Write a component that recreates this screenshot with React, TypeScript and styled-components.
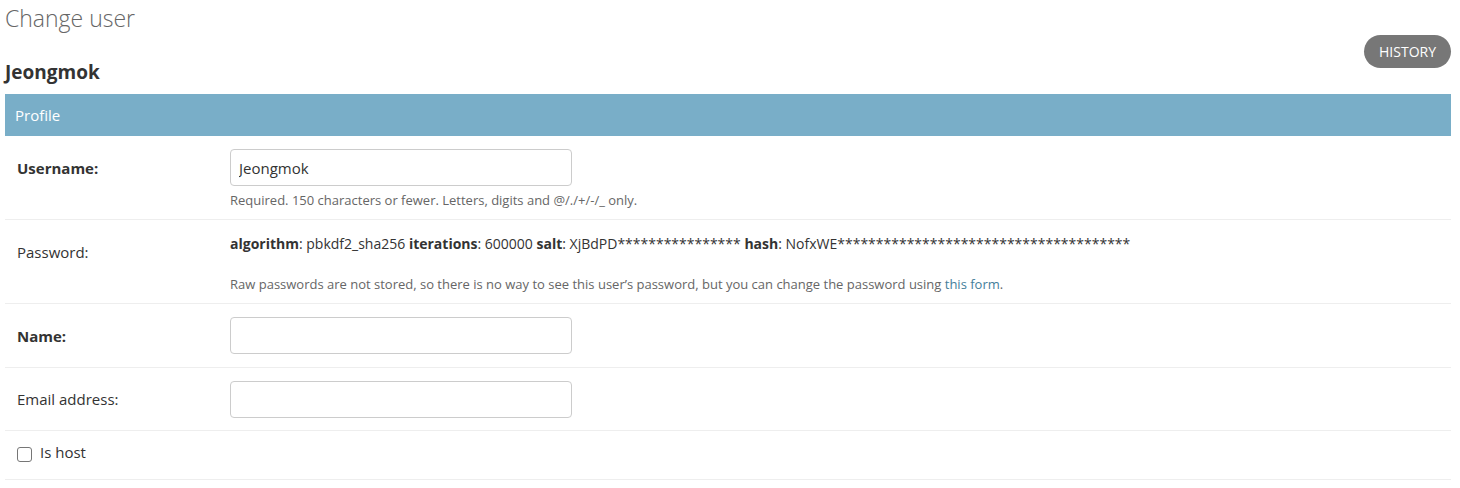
import React from 'react';
import styled, { createGlobalStyle } from 'styled-components';

const GlobalStyle = createGlobalStyle`
  html, body {
    margin: 0;
    padding: 0;
    background: #fff;
  }
  body {
    font-family: "Open Sans", "Noto Sans", "Liberation Sans", sans-serif;
    font-size: 14px;
    color: #333;
  }
`;

const Page = styled.div`
  padding: 0 9px 0 5px;
`;

const Title = styled.h1`
  margin: 0;
  padding-top: 3px;
  font-size: 23px;
  line-height: 30px;
  font-weight: 300;
  color: #666;
`;

const HeaderRow = styled.div`
  display: flex;
  justify-content: space-between;
  align-items: flex-end;
  margin-top: 2px;
  height: 59px;
`;

const UserName = styled.h2`
  margin: 0 0 9px;
  font-size: 19px;
  line-height: 26px;
  font-weight: 700;
  color: #333;
`;

const HistoryButton = styled.a`
  align-self: flex-start;
  display: inline-flex;
  align-items: center;
  height: 33px;
  padding: 0 15px;
  border-radius: 17px;
  background: #777;
  color: #fff;
  font-size: 14px;
  text-transform: uppercase;
  text-decoration: none;
`;

const Fieldset = styled.fieldset`
  margin: 0;
  padding: 0;
  border: 0;
`;

const Legend = styled.div`
  height: 42px;
  display: flex;
  align-items: center;
  padding: 0 10px;
  background: #79aec8;
  color: #fff;
  font-size: 15px;
`;

const Row = styled.div<{ $h: number }>`
  display: flex;
  align-items: flex-start;
  height: ${(p) => p.$h}px;
  box-sizing: border-box;
  padding: 13px 12px 0;
  border-bottom: 1px solid #eee;
`;

const Label = styled.label<{ $bold?: boolean; $top: number }>`
  width: 213px;
  flex-shrink: 0;
  margin-top: ${(p) => p.$top}px;
  font-size: 15px;
  line-height: 20px;
  font-weight: ${(p) => (p.$bold ? 700 : 400)};
  color: #333;
`;

const Field = styled.div`
  display: flex;
  flex-direction: column;
`;

const Input = styled.input`
  box-sizing: border-box;
  width: 342px;
  height: 37px;
  padding: 0 8px;
  border: 1px solid #ccc;
  border-radius: 4px;
  font-family: inherit;
  font-size: 15px;
  color: #333;
  outline: none;
`;

const Help = styled.div<{ $top: number }>`
  margin-top: ${(p) => p.$top}px;
  font-size: 13px;
  line-height: 16px;
  color: #666;
`;

const HashLine = styled.div`
  margin-top: 1px;
  font-size: 14px;
  line-height: 20px;
  color: #333;

  strong {
    font-weight: 700;
  }
`;

const Link = styled.a`
  color: #447e9b;
  text-decoration: none;
`;

const CheckRow = styled.div`
  display: flex;
  align-items: center;
  gap: 8px;
  height: 49px;
  box-sizing: border-box;
  padding: 0 12px 6px;
  border-bottom: 1px solid #eee;
`;

const Check = styled.span`
  box-sizing: border-box;
  width: 15px;
  height: 15px;
  border: 1px solid #767676;
  border-radius: 3px;
  margin-top: 4px;
`;

const CheckLabel = styled.span`
  font-size: 15px;
  color: #333;
`;

export default function App() {
  return (
    <Page>
      <GlobalStyle />
      <Title>Change user</Title>
      <HeaderRow>
        <UserName>Jeongmok</UserName>
        <HistoryButton href="#">History</HistoryButton>
      </HeaderRow>
      <Fieldset>
        <Legend>Profile</Legend>
        <Row $h={84}>
          <Label $bold $top={9}>Username:</Label>
          <Field>
            <Input defaultValue="Jeongmok" />
            <Help $top={6}>Required. 150 characters or fewer. Letters, digits and @/./+/-/_ only.</Help>
          </Field>
        </Row>
        <Row $h={84}>
          <Label $top={9}>Password:</Label>
          <Field>
            <HashLine>
              <strong>algorithm</strong>: pbkdf2_sha256 <strong>iterations</strong>: 600000{' '}
              <strong>salt</strong>: XjBdPD**************** <strong>hash</strong>:{' '}
              NofxWE**************************************
            </HashLine>
            <Help $top={22}>
              Raw passwords are not stored, so there is no way to see this user’s password, but you can
              change the password using <Link href="#">this form</Link>.
            </Help>
          </Field>
        </Row>
        <Row $h={64}>
          <Label $bold $top={9}>Name:</Label>
          <Input />
        </Row>
        <Row $h={63}>
          <Label $top={8}>Email address:</Label>
          <Input />
        </Row>
        <CheckRow>
          <Check />
          <CheckLabel>Is host</CheckLabel>
        </CheckRow>
      </Fieldset>
    </Page>
  );
}
